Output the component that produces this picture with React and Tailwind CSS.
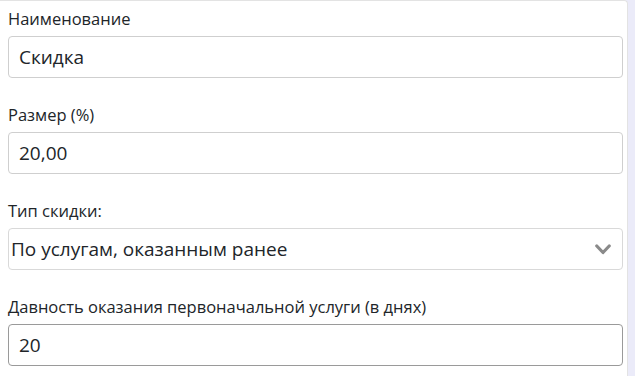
export default function App() {
  const font = { fontFamily: '"Open Sans", "Noto Sans", sans-serif' };
  const Field = ({ label, children }) => (
    <div className="flex flex-col">
      <div className="h-[26px] pt-[2px] text-[16.5px] leading-[24px] text-[#212529]">{label}</div>
      <div className="mt-[5px]">{children}</div>
    </div>
  );
  const inputCls =
    "h-[42px] w-full rounded-[4px] border border-[#cfcfcf] bg-white px-[10px] text-[19px] leading-[40px] text-[#212529] flex items-center";
  return (
    <div className="flex h-[376px] w-[635px] bg-[#ebebf9]" style={font}>
      <div className="h-[376px] w-[628px] rounded-tr-[4px] border-t border-r border-[#e3e3e3] bg-white pl-[8px] pr-[4px] pt-[4px]">
        <div className="flex flex-col gap-[23px]">
          <Field label="Наименование">
            <div className={inputCls}>Скидка</div>
          </Field>
          <Field label="Размер (%)">
            <div className={inputCls}>20,00</div>
          </Field>
          <Field label="Тип скидки:">
            <div className="h-[42px] w-full rounded-[4px] border border-[#d9d9d9] bg-white pl-[2px] pr-[11px] text-[19px] leading-[40px] text-[#212529] flex items-center justify-between">
              <span>По услугам, оказанным ранее</span>
              <svg width="16" height="11" viewBox="0 0 16 11">
                <path d="M1.8 2 L8 8.5 L14.2 2" fill="none" stroke="#8a8a8a" strokeWidth="3.2" strokeLinecap="round" strokeLinejoin="round" />
              </svg>
            </div>
          </Field>
          <Field label="Давность оказания первоначальной услуги (в днях)">
            <div className="h-[42px] w-full rounded-[4px] border border-[#9a9a9a] bg-white px-[10px] text-[19px] leading-[40px] text-[#212529] flex items-center">20</div>
          </Field>
        </div>
      </div>
    </div>
  );
}
